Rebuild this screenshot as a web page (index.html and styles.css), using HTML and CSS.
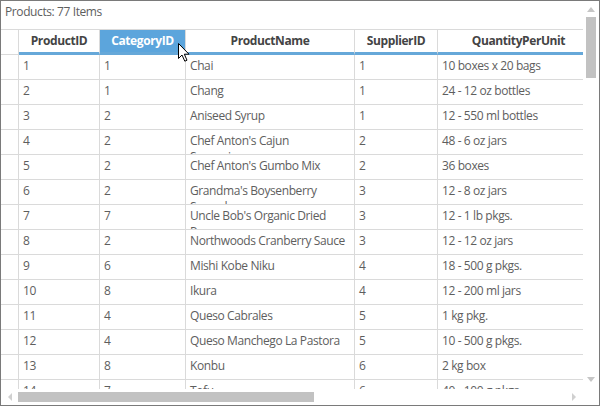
FILE: index.html
```html
<!DOCTYPE html>
<html lang="en">
<head>
    <meta charset="UTF-8">
    <title>Products</title>
    <link rel="stylesheet" href="styles.css">
</head>
<body>
    <div class="grid-frame">
        <div class="grid-main">
            <div class="grid-view">
                <div class="title">Products: 77 Items</div>
                <div class="row header">
                    <div class="cell rh"></div>
                    <div class="cell c1">ProductID</div>
                    <div class="cell c2 selected">CategoryID</div>
                    <div class="cell c3">ProductName</div>
                    <div class="cell c4">SupplierID</div>
                    <div class="cell c5">QuantityPerUnit</div>
                </div>
                <div id="rows"></div>
            </div>
            <div class="vscroll">
                <span class="arrow up"></span>
                <span class="thumb"></span>
                <span class="fill"></span>
                <span class="arrow down"></span>
            </div>
        </div>
        <div class="hscroll">
            <div class="htrack">
                <span class="arrow left"></span>
                <span class="thumb"></span>
                <span class="fill"></span>
                <span class="arrow right"></span>
            </div>
            <div class="corner"></div>
        </div>
    </div>

    <svg class="cursor" width="14" height="21" viewBox="0 0 14 21">
        <path d="M1.5 1.5 L1.5 16.5 L5 13 L7.8 19.2 L10 18.2 L7.3 12.2 L12 12.2 Z" fill="#fff" stroke="#000" stroke-width="1" stroke-linejoin="miter"/>
    </svg>

    <script>
        // names that the real grid wraps onto a second (clipped) line
        const products = [
            [1, 1, 'Chai', 1, '10 boxes x 20 bags'],
            [2, 1, 'Chang', 1, '24 - 12 oz bottles'],
            [3, 2, 'Aniseed Syrup', 1, '12 - 550 ml bottles'],
            [4, 2, "Chef Anton's Cajun<br>Seasoning", 2, '48 - 6 oz jars'],
            [5, 2, "Chef Anton's Gumbo Mix", 2, '36 boxes'],
            [6, 2, "Grandma's Boysenberry<br>Spread", 3, '12 - 8 oz jars'],
            [7, 7, "Uncle Bob's Organic Dried<br>Pears", 3, '12 - 1 lb pkgs.'],
            [8, 2, 'Northwoods Cranberry Sauce', 3, '12 - 12 oz jars'],
            [9, 6, 'Mishi Kobe Niku', 4, '18 - 500 g pkgs.'],
            [10, 8, 'Ikura', 4, '12 - 200 ml jars'],
            [11, 4, 'Queso Cabrales', 5, '1 kg pkg.'],
            [12, 4, 'Queso Manchego La Pastora', 5, '10 - 500 g pkgs.'],
            [13, 8, 'Konbu', 6, '2 kg box'],
            [14, 7, 'Tofu', 6, '40 - 100 g pkgs.']
        ];

        const rows = document.getElementById('rows');
        products.forEach(p => {
            const row = document.createElement('div');
            row.className = 'row';
            row.innerHTML = '<div class="cell rh"></div>' +
                p.map((v, i) => `<div class="cell c${i + 1}">${v}</div>`).join('');
            rows.appendChild(row);
        });
    </script>
</body>
</html>
```

FILE: styles.css
```css
* {
    margin: 0;
    padding: 0;
    box-sizing: border-box;
}
body {
    background: #fff;
    font-family: "Open Sans", "Noto Sans", sans-serif;
    font-size: 12px;
    letter-spacing: -0.4px;
    color: #5e5e5e;
}
.grid-frame {
    width: 600px;
    height: 406px;
    border: 1px solid #7a7a7a;
    display: flex;
    flex-direction: column;
    overflow: hidden;
}
.grid-main {
    display: flex;
    height: 388px;
}
.grid-view {
    width: 583px;
    overflow: hidden;
}
.title {
    height: 28px;
    padding: 3px 4px;
    line-height: 16px;
}
.row {
    display: flex;
    height: 25px;
    border-bottom: 1px solid #dadada;
}
.cell {
    flex-shrink: 0;
    border-right: 1px solid #dadada;
    padding: 3px 4px 0;
    line-height: 16px;
    overflow: hidden;
}
.rh { width: 18px; }
.c1 { width: 81px; }
.c2 { width: 86px; }
.c3 { width: 169px; }
.c4 { width: 83px; }
.c5 { width: 162px; }

.header {
    height: 26px;
    border-top: 1px solid #dadada;
    border-bottom: none;
}
.header .cell {
    height: 25px;
    border-bottom: 3px solid #66a8d9;
    padding: 3px 4px 0;
    text-align: center;
    font-weight: bold;
    color: #444;
}
.header .rh {
    border-bottom: 1px solid #dadada;
}
.header .selected {
    background: #5ca5dc;
    color: #fff;
}

/* scrollbars */
.vscroll {
    width: 16px;
    display: flex;
    flex-direction: column;
    align-items: center;
    padding: 6px 0 7px;
}
.vscroll .thumb {
    width: 10px;
    height: 61px;
    margin-top: 5px;
    background: #c2c2c2;
}
.fill {
    flex: 1;
}
.arrow {
    width: 0;
    height: 0;
    border: 4px solid transparent;
}
.arrow.up {
    border-top: none;
    border-bottom: 5px solid #c6c6c6;
}
.arrow.down {
    border-bottom: none;
    border-top: 5px solid #c6c6c6;
}
.arrow.left {
    border-left: none;
    border-right: 4px solid #d0d0d0;
}
.arrow.right {
    border-right: none;
    border-left: 4px solid #d0d0d0;
}
.hscroll {
    display: flex;
    height: 16px;
}
.htrack {
    width: 583px;
    display: flex;
    align-items: center;
    padding: 0 7px 0 7px;
}
.htrack .thumb {
    width: 296px;
    height: 10px;
    margin-left: 6px;
    background: #c2c2c2;
}
.corner {
    width: 16px;
}
.cursor {
    position: absolute;
    left: 177px;
    top: 42px;
}
```
